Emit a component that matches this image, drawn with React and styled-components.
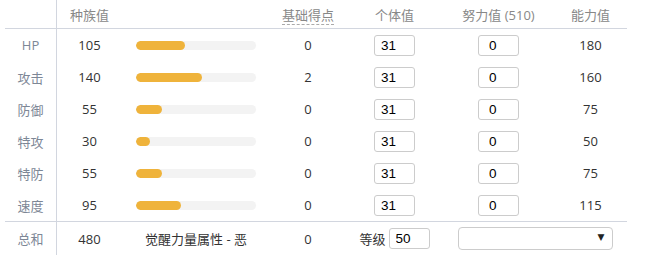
import styled, { createGlobalStyle } from "styled-components";

const GlobalStyle = createGlobalStyle`
  body {
    margin: 0;
    background: #fff;
    font-family: "Open Sans", "Noto Sans CJK SC", sans-serif;
    font-size: 13px;
    color: #333;
  }
`;

const stats = [
  { name: "HP", base: 105, ev: 0, total: 180 },
  { name: "攻击", base: 140, ev: 2, total: 160 },
  { name: "防御", base: 55, ev: 0, total: 75 },
  { name: "特攻", base: 30, ev: 0, total: 50 },
  { name: "特防", base: 55, ev: 0, total: 75 },
  { name: "速度", base: 95, ev: 0, total: 115 },
];

function App() {
  return (
    <>
      <GlobalStyle />
      <Table>
        <Row $height={28} $line>
          <Label />
          <HeadCell>种族值</HeadCell>
          <Cell />
          <HeadCell>
            <Dotted>基础得点</Dotted>
          </HeadCell>
          <HeadCell>个体值</HeadCell>
          <HeadCell>努力值 (510)</HeadCell>
          <HeadCell>能力值</HeadCell>
        </Row>
        {stats.map((s, i) => (
          <Row key={s.name} $height={32} $line={i === stats.length - 1}>
            <Label>{s.name}</Label>
            <Cell>{s.base}</Cell>
            <BarCell>
              <Track>
                <Fill style={{ width: `${(s.base / 255) * 100}%` }} />
              </Track>
            </BarCell>
            <Cell>{s.ev}</Cell>
            <Cell>
              <NumInput defaultValue="31" />
            </Cell>
            <Cell>
              <NumInput defaultValue="0" $pad={10} />
            </Cell>
            <Cell>{s.total}</Cell>
          </Row>
        ))}
        <Row $height={33}>
          <Label>总和</Label>
          <Cell>480</Cell>
          <Cell>觉醒力量属性 - 恶</Cell>
          <Cell>0</Cell>
          <Cell>
            <Level>等级</Level>
            <NumInput defaultValue="50" />
          </Cell>
          <SpanCell>
            <SelectWrap>
              <Select defaultValue="">
                <option value=""></option>
              </Select>
              <Arrow>▼</Arrow>
            </SelectWrap>
          </SpanCell>
        </Row>
      </Table>
    </>
  );
}

export default App;

const Table = styled.div`
  width: 622px;
  margin-left: 5px;
`;

const Row = styled.div`
  display: grid;
  grid-template-columns: 52px 65px 148px 76px 97px 111px 73px;
  height: ${({ $height }) => $height}px;
  border-bottom: ${({ $line }) => ($line ? "1px solid #d2d6df" : "none")};
`;

const Cell = styled.div`
  display: flex;
  align-items: center;
  justify-content: center;
  white-space: nowrap;
`;

const Label = styled(Cell)`
  color: #7d8796;
  border-right: 1px solid #d2d6df;
`;

const HeadCell = styled(Cell)`
  color: #888;
`;

const Dotted = styled.span`
  line-height: 16px;
  padding-bottom: 1px;
  margin-top: 3px;
  border-bottom: 1px dashed #aaa;
`;

const BarCell = styled(Cell)`
  justify-content: flex-start;
  padding-left: 14px;
`;

const Track = styled.div`
  width: 120px;
  height: 9px;
  border-radius: 5px;
  background: #f3f3f3;
  overflow: hidden;
`;

const Fill = styled.div`
  height: 100%;
  border-radius: 5px;
  background: #efb33b;
`;

const NumInput = styled.input`
  box-sizing: border-box;
  width: 41px;
  height: 21px;
  padding: 0 0 0 ${({ $pad }) => $pad || 6}px;
  border: 1px solid #ccc;
  border-radius: 3px;
  font-family: "Liberation Sans", Arial, sans-serif;
  font-size: 13.5px;
  color: #000;
  outline: none;
`;

const Level = styled.span`
  margin-right: 3px;
  color: #333;
`;

const SpanCell = styled(Cell)`
  grid-column: span 2;
`;

const SelectWrap = styled.div`
  position: relative;
  width: 155px;
  height: 23px;
`;

const Select = styled.select`
  appearance: none;
  box-sizing: border-box;
  width: 100%;
  height: 100%;
  border: 1px solid #ccc;
  border-radius: 4px;
  background: #fff;
  outline: none;
`;

const Arrow = styled.span`
  position: absolute;
  right: 8px;
  top: 5px;
  font-size: 9px;
  color: #222;
  pointer-events: none;
  font-family: "DejaVu Sans", sans-serif;
`;
